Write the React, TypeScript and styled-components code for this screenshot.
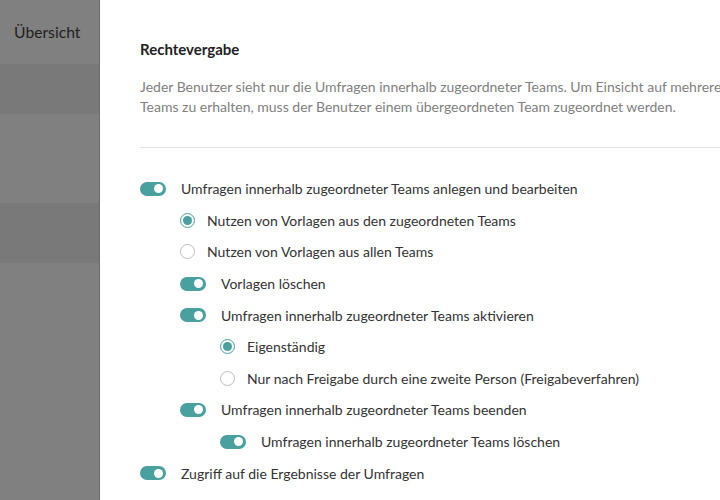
import React from "react";
import styled, { createGlobalStyle } from "styled-components";

const GlobalStyle = createGlobalStyle`
  html, body {
    margin: 0;
    padding: 0;
    overflow: hidden;
    background: #ffffff;
    font-family: Lato, "Open Sans", "Liberation Sans", sans-serif;
  }
`;

const Page = styled.div`
  display: flex;
  height: 500px;
  width: 720px;
  overflow: hidden;
`;

const Sidebar = styled.nav`
  flex: 0 0 99px;
  display: flex;
  flex-direction: column;
  background: #808080;
  border-right: 1px solid #6a6a6a;
`;

const NavItem = styled.div<{ $height: number; $dark?: boolean }>`
  height: ${({ $height }) => $height}px;
  display: flex;
  align-items: center;
  padding-left: 14px;
  box-sizing: border-box;
  background: ${({ $dark }) => ($dark ? "#797979" : "#808080")};
  color: #1f1f1f;
  font-size: 15.7px;
`;

const Panel = styled.main`
  flex: 0 0 auto;
  width: 640px;
  padding: 39px 0 0 40px;
`;

const Title = styled.h2`
  margin: 0;
  font-size: 15px;
  line-height: 20px;
  font-weight: 700;
  color: #222222;
`;

const Description = styled.p`
  margin: 18px 0 0;
  width: 620px;
  font-size: 14px;
  line-height: 19.5px;
  color: #808080;
`;

const Divider = styled.hr`
  margin: 31px 0 25px;
  width: 640px;
  border: 0;
  border-top: 1px solid #e3e3e3;
`;

const List = styled.ul`
  list-style: none;
  margin: 0;
  padding: 0;
`;

const Row = styled.li<{ $level: number; $gap: number }>`
  display: flex;
  align-items: center;
  height: 31.6px;
  padding-left: ${({ $level }) => $level * 40}px;
  gap: ${({ $gap }) => $gap}px;
  font-size: 14px;
  color: #333333;
  white-space: nowrap;
`;

const Toggle = styled.span<{ $on: boolean }>`
  position: relative;
  flex: 0 0 26px;
  height: 14px;
  border-radius: 7px;
  background: ${({ $on }) => ($on ? "#4a9f9f" : "#cfcfcf")};

  &::after {
    content: "";
    position: absolute;
    top: 2.5px;
    left: ${({ $on }) => ($on ? "14px" : "3px")};
    width: 9px;
    height: 9px;
    border-radius: 50%;
    background: #ffffff;
  }
`;

const Radio = styled.span<{ $checked: boolean }>`
  flex: 0 0 15px;
  height: 15px;
  box-sizing: border-box;
  border-radius: 50%;
  border: 1px solid ${({ $checked }) => ($checked ? "#4a9f9f" : "#bdbdbd")};
  display: flex;
  align-items: center;
  justify-content: center;

  &::after {
    content: "";
    width: 9px;
    height: 9px;
    border-radius: 50%;
    background: ${({ $checked }) => ($checked ? "#4a9f9f" : "transparent")};
  }
`;

type Option = {
  kind: "toggle" | "radio";
  level: number;
  on: boolean;
  label: string;
};

const options: Option[] = [
  { kind: "toggle", level: 0, on: true, label: "Umfragen innerhalb zugeordneter Teams anlegen und bearbeiten" },
  { kind: "radio", level: 1, on: true, label: "Nutzen von Vorlagen aus den zugeordneten Teams" },
  { kind: "radio", level: 1, on: false, label: "Nutzen von Vorlagen aus allen Teams" },
  { kind: "toggle", level: 1, on: true, label: "Vorlagen löschen" },
  { kind: "toggle", level: 1, on: true, label: "Umfragen innerhalb zugeordneter Teams aktivieren" },
  { kind: "radio", level: 2, on: true, label: "Eigenständig" },
  { kind: "radio", level: 2, on: false, label: "Nur nach Freigabe durch eine zweite Person (Freigabeverfahren)" },
  { kind: "toggle", level: 1, on: true, label: "Umfragen innerhalb zugeordneter Teams beenden" },
  { kind: "toggle", level: 2, on: true, label: "Umfragen innerhalb zugeordneter Teams löschen" },
  { kind: "toggle", level: 0, on: true, label: "Zugriff auf die Ergebnisse der Umfragen" },
];

const App = () => {
  return (
    <>
      <GlobalStyle />
      <Page>
        <Sidebar>
          <NavItem $height={64}>Übersicht</NavItem>
          <NavItem $height={50} $dark />
          <NavItem $height={89} />
          <NavItem $height={60} $dark />
          <NavItem $height={237} />
        </Sidebar>

        <Panel>
          <Title>Rechtevergabe</Title>
          <Description>
            Jeder Benutzer sieht nur die Umfragen innerhalb zugeordneter Teams. Um Einsicht auf mehrere
            Teams zu erhalten, muss der Benutzer einem übergeordneten Team zugeordnet werden.
          </Description>
          <Divider />

          <List>
            {options.map((opt) => (
              <Row key={opt.label} $level={opt.level} $gap={opt.kind === "toggle" ? 15 : 12}>
                {opt.kind === "toggle" ? <Toggle $on={opt.on} /> : <Radio $checked={opt.on} />}
                {opt.label}
              </Row>
            ))}
          </List>
        </Panel>
      </Page>
    </>
  );
};

export default App;
